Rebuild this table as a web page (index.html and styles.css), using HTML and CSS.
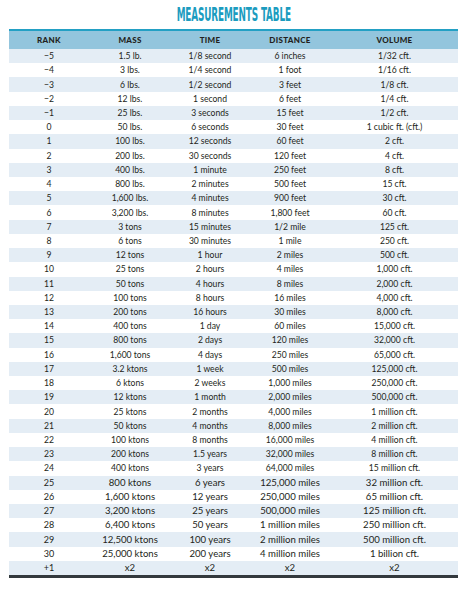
FILE: index.html
```html
<!DOCTYPE html>
<html>
<head>
<meta charset="utf-8">
<link rel="stylesheet" href="styles.css">
</head>
<body>
<div class="page">
  <h1 class="title"><span class="title-text">MEASUREMENTS TABLE</span></h1>
  <table class="mtable">
    <colgroup>
      <col class="c-rank"><col class="c-mass"><col class="c-time"><col class="c-dist"><col class="c-vol">
    </colgroup>
    <thead>
      <tr><th>RANK</th><th>MASS</th><th>TIME</th><th>DISTANCE</th><th>VOLUME</th></tr>
    </thead>
    <tbody>
      <tr><td>−5</td><td>1.5 lb.</td><td>1/8 second</td><td>6 inches</td><td>1/32 cft.</td></tr>
      <tr><td>−4</td><td>3 lbs.</td><td>1/4 second</td><td>1 foot</td><td>1/16 cft.</td></tr>
      <tr><td>−3</td><td>6 lbs.</td><td>1/2 second</td><td>3 feet</td><td>1/8 cft.</td></tr>
      <tr><td>−2</td><td>12 lbs.</td><td>1 second</td><td>6 feet</td><td>1/4 cft.</td></tr>
      <tr><td>−1</td><td>25 lbs.</td><td>3 seconds</td><td>15 feet</td><td>1/2 cft.</td></tr>
      <tr><td>0</td><td>50 lbs.</td><td>6 seconds</td><td>30 feet</td><td>1 cubic ft. (cft.)</td></tr>
      <tr><td>1</td><td>100 lbs.</td><td>12 seconds</td><td>60 feet</td><td>2 cft.</td></tr>
      <tr><td>2</td><td>200 lbs.</td><td>30 seconds</td><td>120 feet</td><td>4 cft.</td></tr>
      <tr><td>3</td><td>400 lbs.</td><td>1 minute</td><td>250 feet</td><td>8 cft.</td></tr>
      <tr><td>4</td><td>800 lbs.</td><td>2 minutes</td><td>500 feet</td><td>15 cft.</td></tr>
      <tr><td>5</td><td>1,600 lbs.</td><td>4 minutes</td><td>900 feet</td><td>30 cft.</td></tr>
      <tr><td>6</td><td>3,200 lbs.</td><td>8 minutes</td><td>1,800 feet</td><td>60 cft.</td></tr>
      <tr><td>7</td><td>3 tons</td><td>15 minutes</td><td>1/2 mile</td><td>125 cft.</td></tr>
      <tr><td>8</td><td>6 tons</td><td>30 minutes</td><td>1 mile</td><td>250 cft.</td></tr>
      <tr><td>9</td><td>12 tons</td><td>1 hour</td><td>2 miles</td><td>500 cft.</td></tr>
      <tr><td>10</td><td>25 tons</td><td>2 hours</td><td>4 miles</td><td>1,000 cft.</td></tr>
      <tr><td>11</td><td>50 tons</td><td>4 hours</td><td>8 miles</td><td>2,000 cft.</td></tr>
      <tr><td>12</td><td>100 tons</td><td>8 hours</td><td>16 miles</td><td>4,000 cft.</td></tr>
      <tr><td>13</td><td>200 tons</td><td>16 hours</td><td>30 miles</td><td>8,000 cft.</td></tr>
      <tr><td>14</td><td>400 tons</td><td>1 day</td><td>60 miles</td><td>15,000 cft.</td></tr>
      <tr><td>15</td><td>800 tons</td><td>2 days</td><td>120 miles</td><td>32,000 cft.</td></tr>
      <tr><td>16</td><td>1,600 tons</td><td>4 days</td><td>250 miles</td><td>65,000 cft.</td></tr>
      <tr><td>17</td><td>3.2 ktons</td><td>1 week</td><td>500 miles</td><td>125,000 cft.</td></tr>
      <tr><td>18</td><td>6 ktons</td><td>2 weeks</td><td>1,000 miles</td><td>250,000 cft.</td></tr>
      <tr><td>19</td><td>12 ktons</td><td>1 month</td><td>2,000 miles</td><td>500,000 cft.</td></tr>
      <tr><td>20</td><td>25 ktons</td><td>2 months</td><td>4,000 miles</td><td>1 million cft.</td></tr>
      <tr><td>21</td><td>50 ktons</td><td>4 months</td><td>8,000 miles</td><td>2 million cft.</td></tr>
      <tr><td>22</td><td>100 ktons</td><td>8 months</td><td>16,000 miles</td><td>4 million cft.</td></tr>
      <tr><td>23</td><td>200 ktons</td><td>1.5 years</td><td>32,000 miles</td><td>8 million cft.</td></tr>
      <tr><td>24</td><td>400 ktons</td><td>3 years</td><td>64,000 miles</td><td>15 million cft.</td></tr>
      <tr class="big"><td>25</td><td>800 ktons</td><td>6 years</td><td>125,000 miles</td><td>32 million cft.</td></tr>
      <tr class="big"><td>26</td><td>1,600 ktons</td><td>12 years</td><td>250,000 miles</td><td>65 million cft.</td></tr>
      <tr class="big"><td>27</td><td>3,200 ktons</td><td>25 years</td><td>500,000 miles</td><td>125 million cft.</td></tr>
      <tr class="big"><td>28</td><td>6,400 ktons</td><td>50 years</td><td>1 million miles</td><td>250 million cft.</td></tr>
      <tr class="big"><td>29</td><td>12,500 ktons</td><td>100 years</td><td>2 million miles</td><td>500 million cft.</td></tr>
      <tr class="big"><td>30</td><td>25,000 ktons</td><td>200 years</td><td>4 million miles</td><td>1 billion cft.</td></tr>
      <tr class="big"><td>+1</td><td>x2</td><td>x2</td><td>x2</td><td>x2</td></tr>
    </tbody>
  </table>
</div>
</body>
</html>
```

FILE: styles.css
```css
html, body {
  margin: 0;
  padding: 0;
  background: #ffffff;
}

.page {
  padding: 0 8px 0 9px;
  font-family: "Lato", "Open Sans", sans-serif;
  color: #231f20;
}

.title {
  margin: 0;
  height: 29px;
  display: flex;
  justify-content: center;
  align-items: center;
  padding-left: 1px;
}

.title-text {
  display: inline-block;
  font-family: "DejaVu Sans Condensed", "DejaVu Sans", sans-serif;
  font-weight: bold;
  font-size: 19px;
  line-height: 19px;
  color: #1b9cbf;
  transform: scaleX(0.52);
  letter-spacing: -0.3px;
  white-space: nowrap;
}

.mtable {
  width: 100%;
  border-collapse: collapse;
  table-layout: fixed;
  border-top: 2px solid #23a0c4;
  border-bottom: 3px solid #33393d;
}

.c-rank { width: 80px; }
.c-mass { width: 82px; }
.c-time { width: 78px; }
.c-dist { width: 82px; }
.c-vol { width: auto; }

.mtable th {
  background: #93c5dd;
  height: 18px;
  padding: 0;
  font-size: 8px;
  font-weight: 900;
  letter-spacing: 0.3px;
  text-align: center;
  color: #231f20;
}

.mtable td {
  height: 14.22px;
  padding: 0;
  font-size: 8.6px;
  line-height: 10px;
  text-align: center;
  white-space: nowrap;
}

.mtable tbody tr:nth-child(odd) {
  background: #e4edf5;
}

.mtable tbody tr.big td {
  font-size: 9.6px;
}

.mtable tbody tr.big td:first-child {
  font-size: 9px;
}
```
